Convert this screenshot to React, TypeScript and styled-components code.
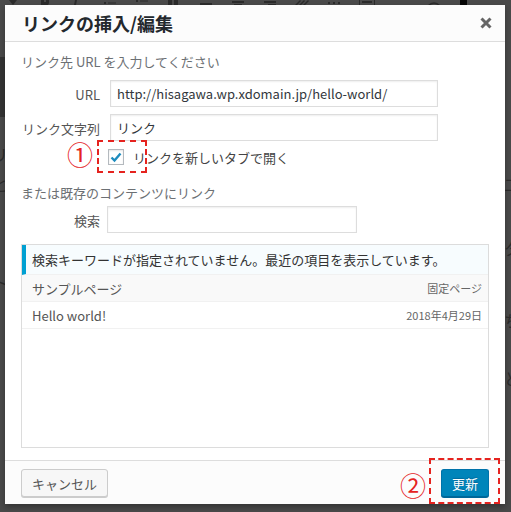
import React from 'react';
import styled, { createGlobalStyle } from 'styled-components';

const FONT = `"Noto Sans CJK JP", "Noto Sans", "Liberation Sans", sans-serif`;
const RED = '#e5231f';

const GlobalStyle = createGlobalStyle`
    html, body {
        margin: 0;
        padding: 0;
    }
    body {
        font-family: ${FONT};
        background: #4a4a4a;
    }
    * {
        box-sizing: border-box;
    }
`;

const Page = styled.div`
    position: relative;
    width: 511px;
    height: 512px;
    overflow: hidden;
    background: #4a4a4a;
`;

/* dimmed editor behind the dialog */
const Backdrop = styled.div`
    display: flex;
    flex-direction: column;
    height: 100%;
`;

const EditorToolbar = styled.div`
    height: 57px;
    flex: none;
    display: flex;
    align-items: flex-start;
    gap: 14px;
    padding: 0 6px;
    color: #2b2b2b;

    svg {
        flex: none;
    }
`;

const EditorImage = styled.div`
    width: 120px;
    height: 60px;
    flex: none;
    background: #343434;
`;

const EditorLine = styled.div<{ $gap: number }>`
    display: flex;
    justify-content: space-between;
    margin-top: ${(p) => p.$gap}px;
    font-size: 16px;
    line-height: 18px;
    color: #2c2c2c;

    span:first-child {
        margin-left: -8px;
    }
    span:last-child {
        margin-right: -9px;
    }
`;

/* dialog */
const Modal = styled.div`
    position: absolute;
    left: 5px;
    top: 5px;
    width: 500px;
    height: 499px;
    background: #fff;
    display: flex;
    flex-direction: column;
    box-shadow: 0 3px 6px rgba(0, 0, 0, 0.3);
`;

const Header = styled.div`
    height: 37px;
    flex: none;
    display: flex;
    align-items: center;
    justify-content: space-between;
    padding: 0 13px 0 17px;
    background: #fcfcfc;
    border-bottom: 1px solid #ddd;
`;

const Title = styled.h1`
    margin: 0;
    font-size: 18px;
    font-weight: 700;
    line-height: 24px;
    color: #23282d;
`;

const CloseButton = styled.button`
    display: flex;
    padding: 0;
    border: 0;
    background: none;
    color: #666;
`;

const Body = styled.div`
    flex: 1;
    display: flex;
    flex-direction: column;
    padding: 10px 16px 12px;
`;

const Note = styled.p<{ $top?: number }>`
    margin: ${(p) => p.$top ?? 0}px 0 0;
    font-size: 13px;
    line-height: 20px;
    color: #6c7074;
`;

const FieldRow = styled.div<{ $top: number; $gap: number }>`
    display: flex;
    align-items: center;
    gap: ${(p) => p.$gap}px;
    margin-top: ${(p) => p.$top}px;
`;

const FieldLabel = styled.label`
    width: 79px;
    flex: none;
    padding-top: 3px;
    text-align: right;
    font-size: 13px;
    line-height: 20px;
    color: #555;
`;

const TextInput = styled.input<{ $width: number }>`
    width: ${(p) => p.$width}px;
    height: 27px;
    margin: 0;
    padding: 0 6px;
    border: 1px solid #ddd;
    border-radius: 0;
    box-shadow: inset 0 1px 2px rgba(0, 0, 0, 0.07);
    background: #fff;
    font-family: ${FONT};
    font-size: 13px;
    color: #32373c;
    outline: none;
`;

const CheckRow = styled.label`
    display: flex;
    align-items: center;
    gap: 9px;
    height: 20px;
    margin-top: 6px;
    padding-left: 87px;
    font-size: 13px;
    color: #444;
`;

const CheckBox = styled.span`
    width: 16px;
    height: 16px;
    display: flex;
    align-items: center;
    justify-content: center;
    border: 1px solid #b4b9be;
    background: #fff;
    box-shadow: inset 0 1px 2px rgba(0, 0, 0, 0.1);
`;

const Results = styled.div`
    flex: 1;
    margin-top: 11px;
    border: 1px solid #dcdcdc;
    background: #fff;
`;

const Notice = styled.div`
    height: 30px;
    display: flex;
    align-items: center;
    padding-left: 6px;
    border-left: 4px solid #00a0d2;
    border-bottom: 1px solid #f1f1f1;
    background: #f7fcfe;
    font-size: 13px;
    color: #333;
`;

const ResultRow = styled.div<{ $alt?: boolean }>`
    height: 27px;
    display: flex;
    align-items: center;
    justify-content: space-between;
    padding: 0 6px 0 10px;
    border-bottom: 1px solid #f1f1f1;
    background: ${(p) => (p.$alt ? '#f9f9f9' : '#fff')};
`;

const ResultTitle = styled.span`
    font-size: 13px;
    color: #555;
`;

const ResultMeta = styled.span`
    font-size: 11px;
    color: #666;
`;

const Footer = styled.div`
    height: 44px;
    flex: none;
    display: flex;
    align-items: flex-start;
    justify-content: space-between;
    padding: 8px 16px;
    border-top: 1px solid #ddd;
    background: #fcfcfc;
`;

const Button = styled.button<{ $primary?: boolean; $width: number }>`
    width: ${(p) => p.$width}px;
    height: 28px;
    padding: 0;
    border-radius: 3px;
    font-family: ${FONT};
    font-size: 13px;
    border: 1px solid ${(p) => (p.$primary ? '#0073aa' : '#ccc')};
    border-bottom-color: ${(p) => (p.$primary ? '#006799' : '#ccc')};
    background: ${(p) => (p.$primary ? '#0085ba' : '#f7f7f7')};
    color: ${(p) => (p.$primary ? '#fff' : '#555')};
    box-shadow: 0 1px 0 ${(p) => (p.$primary ? '#006799' : '#ccc')};
    text-shadow: ${(p) => (p.$primary ? '0 -1px 1px #006799' : 'none')};
`;

/* red hand-drawn annotations */
const DashBox = styled.div<{ $x: number; $y: number; $w: number; $h: number }>`
    position: absolute;
    left: ${(p) => p.$x}px;
    top: ${(p) => p.$y}px;
    width: ${(p) => p.$w}px;
    height: ${(p) => p.$h}px;
    border: 2px dashed ${RED};
    pointer-events: none;
`;

const Marker = styled.span<{ $x: number; $y: number }>`
    position: absolute;
    left: ${(p) => p.$x}px;
    top: ${(p) => p.$y}px;
    font-size: 26px;
    line-height: 26px;
    color: ${RED};
`;

const CheckMark = () => (
    <svg width="12" height="11" viewBox="0 0 12 11">
        <path d="M1.5 5.5 L4.5 8.5 L10.5 1.5" fill="none" stroke="#1e8cbe" strokeWidth="2.4" />
    </svg>
);

const CloseIcon = () => (
    <svg width="12" height="12" viewBox="0 0 12 12">
        <path d="M1.5 1.5 L10.5 10.5 M10.5 1.5 L1.5 10.5" stroke="currentColor" strokeWidth="3" />
    </svg>
);

// only the lower edge of each toolbar icon peeks out above the dialog
const toolbarIcons = [
    'M2 0 L10 0 L6 5 Z',
    'M2 0 L2 5 L9 5 L10 3 L10 0 L7 0 L7 2 L5 2 L5 0 Z',
    'M4 0 L6 0 L5 5 L3 5 Z',
    'M1 2 L3 2 L3 4 L1 4 Z M5 2.5 L13 2.5 L13 3.5 L5 3.5 Z',
    'M1 0 L3 0 L3 2 L1 2 Z M5 0.5 L13 0.5 L13 1.5 L5 1.5 Z',
    'M1 0 L5 0 L5 6 L1 6 Z M7 0 L11 0 L11 6 L7 6 Z',
    'M1 3 L13 3 L13 5 L1 5 Z',
    'M1 1 L13 1 L13 3 L1 3 Z M3 4 L11 4 L11 6 L3 6 Z',
    'M1 1 L13 1 L13 3 L1 3 Z M5 4 L13 4 L13 6 L5 6 Z',
    'M0 5 L5 0 L6 1 L1 6 Z M4 5 L9 0 L10 1 L5 6 Z M8 5 L13 0 L14 1 L9 6 Z',
    'M1 2 L3 2 L3 4 L1 4 Z M6 2 L8 2 L8 4 L6 4 Z M11 2 L13 2 L13 4 L11 4 Z',
    'M0 0 L1 0 L1 5 L15 5 L15 0 L16 0 L16 6 L0 6 Z M3 1 L13 1 L13 3 L3 3 Z',
];

export default function App() {
    return (
        <Page>
            <GlobalStyle />
            <Backdrop>
                <EditorToolbar>
                    {toolbarIcons.map((d, i) => (
                        <svg key={i} width="18" height="7" viewBox="0 0 16 7">
                            <path d={d} fill="currentColor" />
                        </svg>
                    ))}
                    <svg width="80" height="7" viewBox="0 0 80 7">
                        <path d="M38 6 Q44 0 50 6" fill="none" stroke="currentColor" strokeWidth="1.5" />
                        <rect x="70" y="0" width="7" height="6" fill="#050505" />
                    </svg>
                </EditorToolbar>
                <EditorImage />
                <EditorLine $gap={28}>
                    <span>リ</span>
                    <span />
                </EditorLine>
                <EditorLine $gap={12}>
                    <span>と</span>
                    <span>二</span>
                </EditorLine>
                <EditorLine $gap={46}>
                    <span />
                    <span>タ</span>
                </EditorLine>
                <EditorLine $gap={16}>
                    <span>ト</span>
                    <span />
                </EditorLine>
                <EditorLine $gap={20}>
                    <span />
                    <span>ち</span>
                </EditorLine>
                <EditorLine $gap={40}>
                    <span />
                    <span>と</span>
                </EditorLine>
            </Backdrop>

            <Modal>
                <Header>
                    <Title>リンクの挿入/編集</Title>
                    <CloseButton aria-label="閉じる">
                        <CloseIcon />
                    </CloseButton>
                </Header>
                <Body>
                    <Note>リンク先 URL を入力してください</Note>
                    <FieldRow $top={8} $gap={10}>
                        <FieldLabel>URL</FieldLabel>
                        <TextInput $width={328} defaultValue="http://hisagawa.wp.xdomain.jp/hello-world/" />
                    </FieldRow>
                    <FieldRow $top={7} $gap={10}>
                        <FieldLabel>リンク文字列</FieldLabel>
                        <TextInput $width={328} defaultValue="リンク" />
                    </FieldRow>
                    <CheckRow>
                        <CheckBox>
                            <CheckMark />
                        </CheckBox>
                        リンクを新しいタブで開く
                    </CheckRow>
                    <Note $top={16}>または既存のコンテンツにリンク</Note>
                    <FieldRow $top={3} $gap={7}>
                        <FieldLabel>検索</FieldLabel>
                        <TextInput $width={250} defaultValue="" />
                    </FieldRow>
                    <Results>
                        <Notice>検索キーワードが指定されていません。最近の項目を表示しています。</Notice>
                        <ResultRow $alt>
                            <ResultTitle>サンプルページ</ResultTitle>
                            <ResultMeta>固定ページ</ResultMeta>
                        </ResultRow>
                        <ResultRow>
                            <ResultTitle>Hello world!</ResultTitle>
                            <ResultMeta>2018年4月29日</ResultMeta>
                        </ResultRow>
                    </Results>
                </Body>
                <Footer>
                    <Button $width={87}>キャンセル</Button>
                    <Button $primary $width={48}>
                        更新
                    </Button>
                </Footer>
            </Modal>

            <Marker $x={67} $y={141}>①</Marker>
            <DashBox $x={97} $y={140} $w={50} $h={33} />
            <Marker $x={400} $y={472}>②</Marker>
            <DashBox $x={429} $y={458} $w={71} $h={46} />
        </Page>
    );
}
